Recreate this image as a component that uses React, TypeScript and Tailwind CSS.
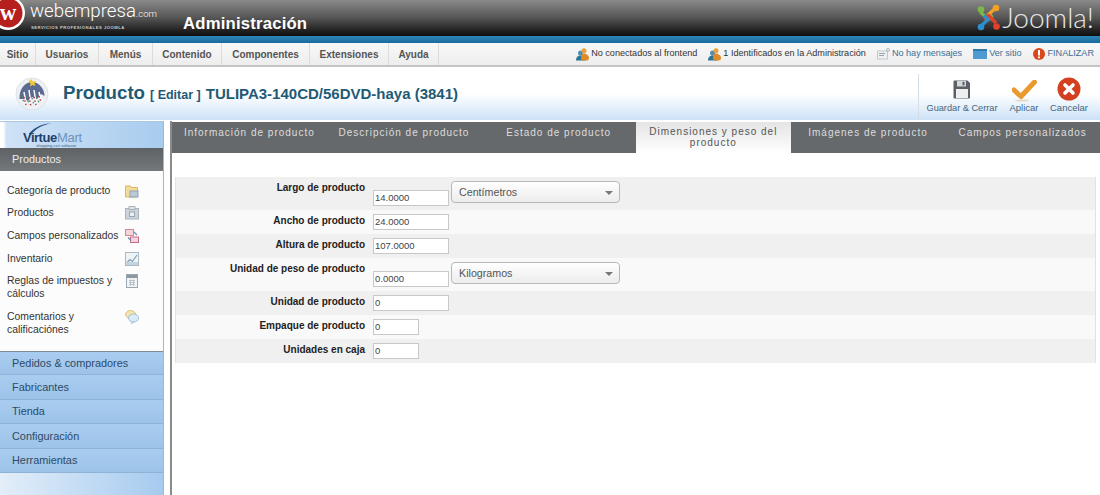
const MENU = [
  { label: "Sitio", w: "w-[36px]" },
  { label: "Usuarios", w: "w-[63px]" },
  { label: "Menús", w: "w-[54px]" },
  { label: "Contenido", w: "w-[69px]" },
  { label: "Componentes", w: "w-[88px]" },
  { label: "Extensiones", w: "w-[79px]" },
  { label: "Ayuda", w: "w-[50px]" },
];

const TABS = [
  "Información de producto",
  "Descripción de producto",
  "Estado de producto",
  "Dimensiones y peso del producto",
  "Imágenes de producto",
  "Campos personalizados",
];

const ACCORDION = ["Pedidos & compradores", "Fabricantes", "Tienda", "Configuración", "Herramientas"];

function UserIcon() {
  return (
    <svg width="13" height="13" viewBox="0 0 13 13" className="shrink-0">
      <circle cx="4.500" cy="5" r="2.500" fill="#4f8fb5" />
      <path d="M0 12.500c0-3.500 2-5 4.500-5s5 1.500 5 5z" fill="#2f7396" />
      <circle cx="8" cy="2.800" r="2.500" fill="#e8a23c" />
      <path d="M5 10c0-3 1.300-4.500 3-4.500S13 7 13 10c0 1.500-1 2.500-2 2.500H7c-1 0-2-1-2-2.500z" fill="#e08a28" />
    </svg>
  );
}

function CategoryIcon() {
  return (
    <svg width="14" height="14" viewBox="0 0 14 14">
      <path d="M0.500 2h5l1 1.500h6V13h-12z" fill="#f3dc9a" stroke="#d8b860" />
      <rect x="5" y="7" width="8" height="6" fill="#b9c9d8" stroke="#8fa3b5" />
    </svg>
  );
}

function ProductIcon() {
  return (
    <svg width="14" height="14" viewBox="0 0 14 14">
      <rect x="0.500" y="2.500" width="13" height="10.500" fill="#ccd3da" stroke="#aab4bd" />
      <rect x="4" y="0.500" width="6" height="3" fill="#dfe4e8" stroke="#aab4bd" />
      <rect x="4.500" y="6" width="5" height="4.500" fill="#eef1f3" stroke="#9aa6b0" />
    </svg>
  );
}

function FieldsIcon() {
  return (
    <svg width="14" height="14" viewBox="0 0 14 14">
      <rect x="0.500" y="0.500" width="8" height="6" fill="#f3d4d8" stroke="#d08a95" />
      <rect x="5.500" y="8" width="8" height="5.500" fill="#f3d4e0" stroke="#c86a85" />
      <path d="M3 8.500l3 3M9 3l3 3" stroke="#6f8fb5" strokeWidth="1.300" />
    </svg>
  );
}

function InventoryIcon() {
  return (
    <svg width="14" height="14" viewBox="0 0 14 14">
      <rect x="0.500" y="0.500" width="13" height="13" fill="#eef3f6" stroke="#a9bac6" />
      <path d="M1.500 11l3.500-3.500 2.500 2L12 3" stroke="#7e9bb0" fill="none" strokeWidth="1.200" />
      <rect x="1" y="10" width="12" height="3" fill="#c5d3dc" />
    </svg>
  );
}

function TaxIcon() {
  return (
    <svg width="14" height="14" viewBox="0 0 14 14">
      <rect x="1.500" y="0.500" width="11" height="13" fill="#f2f4f6" stroke="#9aa6b0" />
      <rect x="2" y="1" width="10" height="3" fill="#8b97a1" />
      <path d="M4 6.500h6M4 8.500h6M4 10.500h6M5.500 5.500v6.500M8.500 5.500v6.500" stroke="#aeb8c0" strokeWidth="0.800" />
    </svg>
  );
}

function CommentIcon() {
  return (
    <svg width="14" height="14" viewBox="0 0 14 14">
      <ellipse cx="5.500" cy="4.500" rx="5" ry="4" fill="#f6e3ae" stroke="#dcc074" />
      <ellipse cx="8.500" cy="8" rx="5" ry="4" fill="#dcebf5" stroke="#9fc0d6" />
      <path d="M7 11.500l-1 2.500 3.500-2z" fill="#dcebf5" stroke="#9fc0d6" strokeWidth="0.600" />
    </svg>
  );
}

const SIDE_ITEMS = [
  { label: "Categoría de producto", icon: <CategoryIcon /> },
  { label: "Productos", icon: <ProductIcon /> },
  { label: "Campos personalizados", icon: <FieldsIcon /> },
  { label: "Inventario", icon: <InventoryIcon /> },
  { label: "Reglas de impuestos y cálculos", icon: <TaxIcon /> },
  { label: "Comentarios y calificaciónes", icon: <CommentIcon /> },
];

function WebempresaLogo() {
  return (
    <svg width="27" height="32" viewBox="0 0 27 32" className="shrink-0">
      <circle cx="8" cy="13" r="17" fill="#fff" />
      <circle cx="8" cy="13" r="14.500" fill="#b5201f" />
      <text x="8" y="20" textAnchor="middle" fill="#fff" fontFamily="'Liberation Serif', serif" fontWeight="700" fontSize="23">
        w
      </text>
    </svg>
  );
}

function VirtueMartLogo() {
  return (
    <svg width="68" height="26" viewBox="0 0 68 26">
      <path d="M8 12C12 6 20 2 31 1 21 3 14 7 10 13z" fill="#27507f" />
      <text x="2" y="19.500" fontFamily="'Liberation Sans', sans-serif" fontSize="13" letterSpacing="-0.500" fontWeight="700" fill="#1f3f6a">
        Virtue
      </text>
      <text x="36" y="19.500" fontFamily="'Liberation Sans', sans-serif" fontSize="13" letterSpacing="-0.300" fill="#6d93ba">
        Mart
      </text>
      <text x="15" y="24.500" fontFamily="'Liberation Sans', sans-serif" fontSize="4" fill="#44617f">
        shopping cart software
      </text>
    </svg>
  );
}

function JoomlaMark() {
  return (
    <svg width="23" height="27" viewBox="0 0 23 27" className="shrink-0" fill="none" strokeWidth="3.400" strokeLinejoin="round">
      <path d="M3.500 8L11 15.500 15.500 11" stroke="#7ab648" />
      <path d="M18 4.500L11 11 15.500 15.500" stroke="#f4a024" />
      <path d="M19 19L11.500 11.500 7.500 16" stroke="#e2402b" />
      <path d="M4 22L11 15.500 7 11.500" stroke="#2a8fcf" />
      <circle cx="4" cy="5.500" r="3.300" fill="#7ab648" />
      <circle cx="19" cy="4" r="3.300" fill="#f4a024" />
      <circle cx="4" cy="23" r="3.300" fill="#2a8fcf" />
      <circle cx="19.500" cy="22.500" r="3.300" fill="#e2402b" />
    </svg>
  );
}

function ProductBadge() {
  return (
    <svg width="34" height="34" viewBox="0 0 34 34">
      <circle cx="17" cy="17" r="16" fill="#eef0f4" stroke="#dfe2e8" />
      <path d="M4.500 22C4 12 10 5 17 5s12.500 7 12.500 14L26 17l-4 5-5-2-4 4-4-2z" fill="#5a6a90" />
      <path d="M16 2l2 2.500 3-.5-1.500 2.500 1 2.500-3-1-2.500 1.500.5-3-2-2z" fill="#f0c83c" />
      <path d="M9 15l2 11M14 13l2 15M19 13l2 13M24 15l2 9" stroke="#fff" strokeWidth="1.500" />
      <path d="M9 20l2 8M14 20l2 9M19 20l2 8M24 19l2 6" stroke="#b03a48" strokeWidth="1.400" strokeDasharray="1.500 2" />
      <path d="M7 19l2 7M12 20l2 8M17 21l2 7M22 20l2 6" stroke="#3f8f5a" strokeWidth="1.200" strokeDasharray="1.500 2.500" />
    </svg>
  );
}

function SaveIcon() {
  return (
    <svg width="18" height="19" viewBox="0 0 18 19">
      <path d="M0.500 1.500a1 1 0 0 1 1-1h13l2.500 2.500v14.500a1 1 0 0 1-1 1h-14.500a1 1 0 0 1-1-1z" fill="#5c6066" />
      <rect x="4" y="1" width="9" height="5.500" fill="#d6d9dc" />
      <rect x="9.500" y="1.800" width="2" height="3.600" fill="#5c6066" />
      <rect x="3" y="9" width="12" height="9" fill="#eceef0" />
    </svg>
  );
}

function ApplyIcon() {
  return (
    <svg width="25" height="22" viewBox="0 0 25 22">
      <path d="M2 10l7 6.500L22.500 2" stroke="#e89a2e" strokeWidth="5" strokeLinecap="round" strokeLinejoin="round" fill="none" />
      <ellipse cx="10" cy="20.500" rx="7" ry="1" fill="#e8d8c0" />
    </svg>
  );
}

function CancelIcon() {
  return (
    <svg width="24" height="24" viewBox="0 0 24 24">
      <circle cx="12" cy="12" r="11.500" fill="#d2401f" />
      <path d="M8 8l8 8M16 8l-8 8" stroke="#fff" strokeWidth="3.600" strokeLinecap="round" />
    </svg>
  );
}

function SelectBox({ label }: { label: string }) {
  return (
    <div className="mb-[3px] ml-[2px] flex h-[22px] w-[169px] items-center justify-between rounded-[4px] border border-[#b8b8b8] bg-gradient-to-b from-white to-[#ececec] pl-[7px] pr-[6px] text-[10.700px] text-[#555]">
      <span>{label}</span>
      <span className="mt-[2px] h-0 w-0 border-x-[4px] border-t-[4px] border-x-transparent border-t-[#777]" />
    </div>
  );
}

function FormRow({
  label,
  value,
  dark,
  small,
  select,
}: {
  label: string;
  value: string;
  dark?: boolean;
  small?: boolean;
  select?: string;
}) {
  return (
    <div className={`flex pb-[4px] pt-[4px] ${dark ? "bg-[#f0f0f0]" : "bg-[#f9f9f9]"}`}>
      <div className="w-[189px] shrink-0 text-right text-[10px] font-bold leading-[13px] text-[#222]">{label}</div>
      <div className="ml-[8px] flex items-end">
        <div
          className={`flex h-[16px] items-center border border-[#c8c8c8] bg-white pl-[1px] pt-[1px] text-[9.500px] text-[#444] ${
            small ? "w-[46px]" : "w-[76px]"
          }`}
        >
          {value}
        </div>
        {select && <SelectBox label={select} />}
      </div>
    </div>
  );
}

export default function App() {
  return (
    <div className="h-[495px] w-[1100px] overflow-hidden bg-white font-['Liberation_Sans',Arial,sans-serif]">
      {/* top banner */}
      <div className="flex h-[36px] items-start justify-between bg-gradient-to-b from-[#8a8a8a] via-[#555] to-[#0e0e0e]">
        <div className="flex items-start">
          <WebempresaLogo />
          <div className="ml-[3px] flex w-[153px] flex-col">
            <div className="whitespace-nowrap font-['Roboto',sans-serif] text-[18.700px] font-light leading-[22px] text-white">
              webempresa<span className="text-[9.500px]">.com</span>
            </div>
            <div className="ml-[1px] text-[4.200px] font-bold leading-[5px] tracking-[0.500px] text-[#ccc]">
              SERVICIOS PROFESIONALES JOOMLA
            </div>
          </div>
          <div className="mt-[14px] text-[16.700px] font-bold leading-[20px] tracking-[0.200px] text-white">
            Administración
          </div>
        </div>
        <div className="mr-[6px] mt-[4px] flex items-start">
          <JoomlaMark />
          <div className="ml-[2px] font-['Lato',sans-serif] text-[28px] font-light leading-[27px] text-[#e8e8e8]">
            Joomla!
          </div>
        </div>
      </div>
      <div className="h-[7px] bg-gradient-to-b from-[#2f86b8] to-[#176a9c]" />

      {/* menu bar */}
      <div className="flex h-[24px] items-stretch justify-between border-b-2 border-[#c4c4c4] bg-gradient-to-b from-[#f8f8f8] to-[#ededed] text-[9.100px]">
        <div className="flex text-[10px]">
          {MENU.map((m) => (
            <div
              key={m.label}
              className={`flex items-center justify-center border-r border-[#dcdcdc] font-bold text-[#555] ${m.w}`}
            >
              {m.label}
            </div>
          ))}
        </div>
        <div className="mr-[6px] flex items-center">
          <UserIcon />
          <span className="ml-[2px] text-[#333]">No conectados al frontend</span>
          <span className="ml-[11px]">
            <UserIcon />
          </span>
          <span className="ml-[2px] text-[#333]">1 Identificados en la Administración</span>
          <svg width="13" height="12" viewBox="0 0 13 12" className="ml-[11px]">
            <rect x="0.500" y="3" width="10" height="8" fill="#eef1f3" stroke="#c3c9ce" />
            <path d="M2 5.500h6M2 7.500h5" stroke="#9aa4ad" />
            <circle cx="11" cy="2" r="1.500" fill="none" stroke="#aeb6bd" />
          </svg>
          <span className="ml-[2px] text-[#3b6f95]">No hay mensajes</span>
          <svg width="14" height="10" viewBox="0 0 14 10" className="ml-[11px]">
            <rect width="14" height="10" fill="#4f9ad0" />
            <rect y="0" width="14" height="2" fill="#2f79ad" />
          </svg>
          <span className="ml-[2px] text-[#3b6f95]">Ver sitio</span>
          <svg width="12" height="12" viewBox="0 0 12 12" className="ml-[11px]">
            <circle cx="6" cy="6" r="6" fill="#d9481c" />
            <rect x="5" y="2" width="2" height="5.500" fill="#fff" />
            <rect x="5" y="8.500" width="2" height="1.800" fill="#fff" />
          </svg>
          <span className="ml-[3px] text-[#3b6f95]">FINALIZAR</span>
        </div>
      </div>

      {/* title band */}
      <div className="flex h-[54px] items-stretch justify-between border-b border-white bg-gradient-to-b from-white via-white to-[#cde2f7]">
        <div className="ml-[15px] flex items-center">
          <ProductBadge />
          <div className="ml-[14px] flex items-baseline font-bold text-[#1f5a75]">
            <span className="text-[18.700px]">Producto</span>
            <span className="ml-[5px] text-[12.500px]">[ Editar ]</span>
            <span className="ml-[5px] text-[15px]">TULIPA3-140CD/56DVD-haya (3841)</span>
          </div>
        </div>
        <div className="mr-[7px] mt-[7px] flex w-[175px] border-l border-[#d4dde6] pl-[6px] text-[9.500px] leading-[12px] text-[#44667f]">
          <div className="mt-[6px] flex w-[74px] flex-col items-center">
            <div className="h-[22px]">
              <SaveIcon />
            </div>
            <span className="whitespace-nowrap text-[9.200px]">Guardar & Cerrar</span>
          </div>
          <div className="ml-[8px] mt-[6px] flex w-[34px] flex-col items-center">
            <div className="h-[22px]">
              <ApplyIcon />
            </div>
            <span>Aplicar</span>
          </div>
          <div className="ml-[8px] mt-[3px] flex w-[40px] flex-col items-center">
            <div className="h-[25px]">
              <CancelIcon />
            </div>
            <span>Cancelar</span>
          </div>
        </div>
      </div>

      <div className="flex h-[375px]">
        {/* left column */}
        <div className="flex w-[164px] shrink-0 flex-col border-r border-[#aeb4ba]">
          <div className="flex h-[27px] border-t border-[#a8c8e6] bg-gradient-to-r from-white from-[2%] via-[#cfe2f6] via-[4%] to-[#a8ccef] pl-[21px]">
            <VirtueMartLogo />
          </div>
          <div className="flex h-[23px] items-center bg-gradient-to-b from-[#5f6264] to-[#75787a] pl-[12px] text-[10.900px] text-[#eee]">
            Productos
          </div>
          <div className="h-[180px] bg-[#fcfcfc] pt-[8px] text-[#333]">
            {SIDE_ITEMS.map((item) => (
              <div key={item.label} className="grid grid-cols-[118px_14px] py-[4.800px] pl-[7px] text-[10.400px] leading-[13px]">
                <span>{item.label}</span>
                <span className="h-[13px]">{item.icon}</span>
              </div>
            ))}
          </div>
          {ACCORDION.map((a, i) => (
            <div
              key={a}
              className={`flex h-[24.400px] items-center border-b border-[#8fb3d6] bg-gradient-to-b from-[#a9cdf0] to-[#9cc3e9] pl-[12px] text-[10.900px] text-[#2f4a66] ${
                i === 0 ? "border-t border-t-[#7f8a94]" : ""
              }`}
            >
              {a}
            </div>
          ))}
          <div className="flex-1 bg-gradient-to-r from-[#e3eef9] to-[#a6cbef]" />
        </div>

        {/* main panel */}
        <div className="ml-[6px] flex-1 border-l-2 border-[#8a8a8a]">
          <div className="mt-px grid h-[31px] grid-cols-6 bg-[#66696b] text-[10px] tracking-[1px] text-[#ddd]">
            {TABS.map((t, i) =>
              i === 3 ? (
                <div
                  key={t}
                  className="bg-gradient-to-b from-[#e4e4e4] to-white px-[8px] pt-[4px] text-center leading-[11px] text-[#555]"
                >
                  {t}
                </div>
              ) : (
                <div key={t} className="whitespace-nowrap pt-[5px] text-center leading-[12px]">
                  {t}
                </div>
              ),
            )}
          </div>
          <div className="ml-[3px] mr-[4px] mt-[24px] border-x border-[#e2e2e2]">
            <FormRow dark label="Largo de producto" value="14.0000" select="Centímetros" />
            <FormRow label="Ancho de producto" value="24.0000" />
            <FormRow dark label="Altura de producto" value="107.0000" />
            <FormRow label="Unidad de peso de producto" value="0.0000" select="Kilogramos" />
            <FormRow dark label="Unidad de producto" value="0" />
            <FormRow small label="Empaque de producto" value="0" />
            <FormRow dark small label="Unidades en caja" value="0" />
          </div>
        </div>
      </div>
    </div>
  );
}
